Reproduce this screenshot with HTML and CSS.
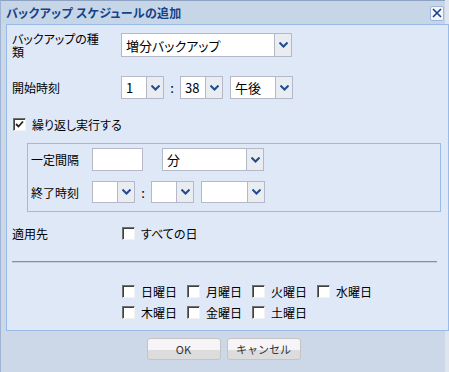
FILE: index.html
```html
<!DOCTYPE html>
<html lang="ja">
<head>
    <meta charset="UTF-8">
    <title>バックアップ スケジュールの追加</title>
    <link rel="stylesheet" href="styles.css">
</head>
<body>
    <div class="win">
        <div class="win-head">
            <span class="win-title">バックアップ スケジュールの追加</span>
            <span class="win-close">
                <svg width="10" height="10" viewBox="0 0 10 10"><path d="M1 1 L9 9 M9 1 L1 9" stroke="#15428b" stroke-width="1.6"/></svg>
            </span>
        </div>

        <div class="panel">
            <div class="row row-type">
                <div class="label"><span class="wrap">バックアップの種類</span></div>
                <div class="combo w-type"><span class="val">増分バックアップ</span><span class="arrow"></span></div>
            </div>

            <div class="row row-start">
                <div class="label">開始時刻</div>
                <div class="combo w-hour"><span class="val">1</span><span class="arrow"></span></div>
                <span class="colon">:</span>
                <div class="combo w-hour"><span class="val">38</span><span class="arrow"></span></div>
                <div class="combo w-ampm"><span class="val">午後</span><span class="arrow"></span></div>
            </div>

            <label class="row row-repeat">
                <span class="check checked">
                    <svg width="9" height="9" viewBox="0 0 9 9"><path d="M1 4 L3.5 6.5 L8 1.5" fill="none" stroke="#222" stroke-width="1.8"/></svg>
                </span>
                <span>繰り返し実行する</span>
            </label>

            <div class="repeat-box">
                <div class="row row-interval">
                    <div class="label sub">一定間隔</div>
                    <div class="textbox"></div>
                    <div class="combo w-unit"><span class="val">分</span><span class="arrow"></span></div>
                </div>
                <div class="row row-end">
                    <div class="label sub">終了時刻</div>
                    <div class="combo w-hour"><span class="val"></span><span class="arrow"></span></div>
                    <span class="colon">:</span>
                    <div class="combo w-hour"><span class="val"></span><span class="arrow"></span></div>
                    <div class="combo w-ampm"><span class="val"></span><span class="arrow"></span></div>
                </div>
            </div>

            <div class="row row-apply">
                <div class="label">適用先</div>
                <label class="opt"><span class="check"></span><span>すべての日</span></label>
            </div>

            <div class="sep"></div>

            <div class="days">
                <label class="opt"><span class="check"></span><span>日曜日</span></label>
                <label class="opt"><span class="check"></span><span>月曜日</span></label>
                <label class="opt"><span class="check"></span><span>火曜日</span></label>
                <label class="opt"><span class="check"></span><span>水曜日</span></label>
                <label class="opt"><span class="check"></span><span>木曜日</span></label>
                <label class="opt"><span class="check"></span><span>金曜日</span></label>
                <label class="opt"><span class="check"></span><span>土曜日</span></label>
            </div>
        </div>

        <div class="win-foot">
            <button class="btn">OK</button>
            <button class="btn">キャンセル</button>
        </div>
    </div>
</body>
</html>
```

FILE: styles.css
```css
html {
    background: #dfe5ee;
}
body {
    margin: 0;
    font-family: "Noto Sans CJK JP", "DejaVu Sans", sans-serif;
    font-size: 12px;
    font-feature-settings: "palt";
    color: #000;
}
.win {
    width: 444px;
    height: 371px;
    border-top: 1px solid #8da2c3;
    border-left: 1px solid #9fb3d2;
    background: #ccd7e7;
}
.win-head {
    height: 23px;
    display: flex;
    align-items: center;
    justify-content: space-between;
    padding: 0 1px 0 5px;
    background: #c7d6e7;
}
.win-title {
    font-weight: bold;
    font-size: 12px;
    color: #15428b;
    letter-spacing: 0.3px;
}
.win-close {
    width: 12px;
    height: 13px;
    margin-top: 1px;
    display: flex;
    align-items: center;
    justify-content: center;
    background: #f2f6fb;
    border: 1px solid #9db5d8;
    border-radius: 2px;
}
.panel {
    margin-left: 5px;
    width: 436px;
    height: 305px;
    border: 1px solid #99bbe8;
    background: #dfe8f6;
    padding-left: 5px;
    box-sizing: content-box;
}
.row {
    display: flex;
    align-items: center;
}
.label {
    width: 109px;
    flex-shrink: 0;
}
.label .wrap {
    display: block;
    width: 96px;
    line-height: 13px;
}
.label.sub {
    width: 61px;
}
.row-type {
    margin-top: 8px;
    height: 24px;
}
.row-start {
    margin-top: 19px;
    height: 23px;
}
.row-repeat {
    margin-top: 18px;
    height: 14px;
    gap: 6px;
    padding-left: 1px;
}
.row-repeat .check {
    display: flex;
    align-items: center;
    justify-content: center;
}

.combo {
    display: flex;
    height: 100%;
    box-sizing: border-box;
    border: 1px solid #b5b8c8;
    background: #fff;
}
.combo .val {
    flex: 1;
    padding-left: 4px;
    font-size: 13px;
    display: flex;
    align-items: center;
}
.combo .arrow {
    width: 16px;
    border-left: 1px solid #b5b8c8;
    background: #e9ecf1 no-repeat center / 9px 6px url("data:image/svg+xml;utf8,<svg xmlns='http://www.w3.org/2000/svg' width='9' height='6' viewBox='0 0 9 6'><path d='M0.5 0.5 L4.5 4.5 L8.5 0.5' fill='none' stroke='%231f4d8f' stroke-width='2'/></svg>");
}
.w-type { width: 171px; }
.w-hour { width: 43px; }
.w-ampm { width: 63px; margin-left: 7px; }
.w-unit { width: 102px; margin-left: 19px; }
.colon {
    width: 16px;
    text-align: center;
    font-size: 13px;
}

.repeat-box {
    margin: 12px 0 0 15px;
    width: 409px;
    height: 67px;
    border: 1px solid #99bbe8;
    padding-left: 3px;
    box-sizing: content-box;
}
.row-interval {
    margin-top: 4px;
    height: 23px;
}
.row-end {
    margin-top: 10px;
    height: 22px;
}
.row-end .w-ampm {
    width: 64px;
}
.textbox {
    width: 51px;
    height: 100%;
    box-sizing: border-box;
    border: 1px solid #b5b8c8;
    background: #fff;
}

.check {
    width: 13px;
    height: 13px;
    box-sizing: border-box;
    flex-shrink: 0;
    background: #fff;
    border-top: 1px solid #707070;
    border-left: 1px solid #707070;
    border-right: 1px solid #f2f2f2;
    border-bottom: 1px solid #f2f2f2;
    box-shadow: inset 1px 1px 0 #404040;
}
.opt {
    display: flex;
    align-items: center;
    gap: 6px;
}
.row-apply {
    margin-top: 14px;
    height: 14px;
}
.row-apply .opt {
    margin-left: 1px;
}
.sep {
    margin-top: 21px;
    width: 425px;
    height: 1px;
    background: #8f8f8f;
    border-bottom: 1px solid #c8cfd9;
}
.days {
    margin: 22px 0 0 110px;
    display: grid;
    grid-template-columns: repeat(4, 65px);
    row-gap: 8px;
}
.days .opt {
    height: 13px;
}

.win-foot {
    display: flex;
    justify-content: center;
    gap: 6px;
    padding-top: 7px;
    padding-left: 1px;
}
.btn {
    width: 74px;
    height: 22px;
    padding: 0;
    font-family: "Noto Sans CJK JP", "DejaVu Sans", sans-serif;
    font-size: 11px;
    color: #333;
    border: 1px solid #c4c4c4;
    border-radius: 3px;
    background: linear-gradient(#f7f4f7 0, #f7f4f7 55%, #dcdcdc 55%, #dcdcdc 100%);
}
```
